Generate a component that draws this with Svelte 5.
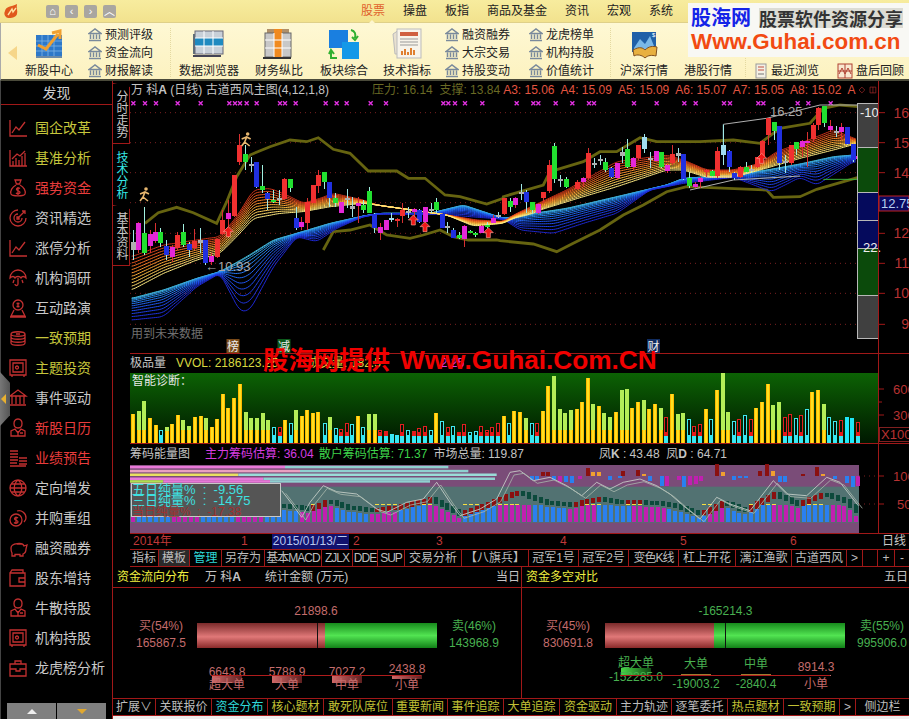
<script>
	// 行情图数据都是从截图上量的, g = 放大3倍后的坐标
	const lerp = (pts, x) => {
		if (x <= pts[0][0]) return pts[0][1];
		for (let i = 1; i < pts.length; i++) {
			if (x <= pts[i][0]) {
				const [a, b] = [pts[i - 1], pts[i]];
				return a[1] + ((b[1] - a[1]) * (x - a[0])) / (b[0] - a[0]);
			}
		}
		return pts[pts.length - 1][1];
	};
	const mx = g => g / 3;
	const my = g => (g - 30) / 3;
	const shift = (arr, d) => arr.map(p => [p[0] + d, ...p.slice(1)]);
	const line = pts => pts.map(p => `${mx(p[0]).toFixed(1)},${my(p[1]).toFixed(1)}`).join(' ');

	const olive = [
		[[45,400],[85,368],[140,352],[190,368],[260,400],[290,335],[320,260],[360,195],[420,170],[480,150],[530,155],[565,143],[610,178],[660,190],[715,243],[800,243],[835,265],[885,265],[945,315],[990,320],[1070,342],[1120,325],
		...shift([[10,320],[130,285],[150,245],[250,215],[300,185],[350,185],[420,143],[470,155],[600,155],[700,150],[780,160],[840,115],[930,100],[970,55],[1020,45],[1075,50]], 1110)],
		[[580,480],[610,425],[660,420],[720,405],[770,435],[840,445],[880,435],[930,420],[970,440],[1015,450],[1100,450],
		...shift([[0,452],[100,462],[170,485],[220,460],[300,420],[370,375],[430,345],[500,305],[560,290],[800,300],[820,322],[900,320],[950,298],[1075,262]], 1110)]
	];

	const orangeTop = [[5,500],[100,465],[200,450],[270,440],[320,380],[370,300],[420,295],[470,315],[520,340],[570,325],[610,310],[700,330],[740,345],[950,375],[1040,390],[1120,395],
		...shift([[40,375],[200,300],[350,215],[500,195],[550,210],[620,240],[700,240],[780,220],[830,185],[900,160],[1000,120],[1075,150]], 1110)];
	const orangeBot = [[5,600],[100,550],[200,510],[270,490],[320,440],[370,385],[450,370],[520,365],[600,350],[700,340],[740,345],[950,375],[1030,408],[1120,400],
		...shift([[40,385],[100,370],[120,360],[250,320],[350,290],[500,240],[550,240],[620,262],[700,262],[780,240],[900,205],[1000,180],[1075,160]], 1110)];
	const blueTop = [[5,625],[100,600],[200,565],[270,545],[350,500],[430,450],[500,430],[600,400],[700,378],[750,370],[900,370],[1000,345],[1120,385],
		...shift([[40,380],[100,370],[200,355],[350,320],[500,285],[550,265],[700,255],[800,240],[900,222],[1000,200],[1060,195]], 1110)];
	const blueBot = [[5,690],[100,680],[200,590],[270,550],[330,665],[360,660],[430,530],[500,440],[560,455],[620,415],[700,380],[750,372],[900,372],[960,375],[1120,388],
		...shift([[60,420],[160,430],[250,400],[350,370],[450,300],[550,280],[700,262],[815,305],[900,262],[950,285],[1060,215]], 1110)];

	const mix = (a, b, t) => a.map((v, i) => Math.round(v + (b[i] - v) * t));
	const ramp = (stops, t) => {
		const f = t * (stops.length - 1);
		const i = Math.min(Math.floor(f), stops.length - 2);
		return `rgb(${mix(stops[i], stops[i + 1], f - i).join(',')})`;
	};
	const smooth = (pts, x, r = 12) => {
		let s = 0;
		for (let d = -r; d <= r; d += 6) s += lerp(pts, x + d);
		return s / (Math.floor((2 * r) / 6) + 1);
	};
	function fan(top, bot, n, stops, power) {
		const out = [];
		for (let k = 0; k < n; k++) {
			const t = k / (n - 1);
			const w = Math.pow(t, power);
			const pts = [];
			for (let x = 5; x <= 2180; x += 6) {
				const a = smooth(top, x);
				pts.push([x, a + (smooth(bot, x) - a) * w]);
			}
			out.push({ pts: line(pts), color: ramp(stops, t) });
		}
		return out;
	}
	const fans = [
		...fan(blueTop, blueBot, 12, [[70,190,215],[40,140,245],[30,80,240],[30,40,210]], 1.7),
		...fan(orangeTop, orangeBot, 11, [[205,50,25],[250,115,35],[255,185,60],[255,235,130]], 1)
	];

	const cfill = { r: '#f03030', g: '#22e030', b: '#2030e0', m: '#e428d8', w: '#b0b0b0', c: '#a0dcf0' };
	const cwick = { r: '#d83030', g: '#a0f0e0', b: '#a0e8e8', m: '#d83030', w: '#a0e8e8', c: '#a0e8e8' };
	// x, 上影, 实体上, 实体下, 下影, 颜色
	const c5 = [
		[8,420,455,480,510,'w'],[25,395,400,480,490,'m'],[43,350,430,490,495,'g'],[59,420,432,468,490,'m'],[75,400,427,452,460,'m'],[91,415,427,458,470,'g'],[108,450,468,495,510,'b'],[126,465,470,500,515,'m'],[142,425,435,475,480,'r'],[160,403,427,465,470,'g'],
		[177,455,462,480,500,'b'],[193,418,452,475,480,'r'],[210,415,450,458,490,'w'],[226,450,450,520,525,'b'],[244,490,498,515,525,'m'],[261,447,447,500,505,'r'],[277,360,390,432,435,'r'],[294,330,370,388,440,'m'],[312,255,255,378,380,'r'],[328,132,165,215,225,'r'],
		[346,165,193,216,240,'g'],[362,200,222,228,245,'w'],[379,215,215,290,295,'b'],[396,225,288,300,310,'g'],[412,305,310,328,360,'b'],[429,300,330,335,340,'g'],[446,300,325,330,345,'w'],[463,265,267,328,330,'r'],[481,268,268,295,305,'g'],[497,350,385,415,420,'b'],
		[514,380,396,412,420,'m'],[531,325,335,400,420,'r'],[548,285,285,338,340,'r'],[565,240,255,288,310,'r'],[582,247,247,275,298,'g'],[598,275,277,325,350,'b'],[615,310,325,340,350,'g'],[632,335,337,368,370,'m'],[650,298,325,330,355,'w'],[667,320,348,358,380,'w'],
		[683,320,340,348,400,'m'],[700,330,345,360,370,'g'],[717,290,303,368,370,'g'],[733,370,372,415,430,'b'],[750,400,410,430,450,'m'],[767,390,390,420,420,'m'],[783,370,383,390,395,'c'],[800,385,388,392,410,'r'],[817,338,360,378,400,'r'],[834,350,362,370,385,'w'],
		[851,355,358,365,395,'m'],[868,358,360,395,398,'b'],[885,350,352,395,398,'m'],[902,340,357,362,370,'w'],[919,325,337,360,370,'g'],[936,372,373,413,415,'b'],[952,395,408,412,430,'w'],[969,415,420,443,445,'b'],[986,425,436,445,448,'g'],[1003,405,408,448,470,'m'],
		[1020,420,422,428,430,'g'],[1036,426,428,436,440,'g'],[1054,405,408,428,430,'m'],[1071,395,405,412,415,'g'],[1088,375,385,398,400,'m'],[1105,365,375,378,385,'w']
	];
	const c6 = [
		[12,323,323,372,375,'r'],[29,325,332,352,365,'g'],[46,320,325,345,355,'m'],[62,282,305,312,330,'w'],[79,300,305,335,370,'b'],[97,335,335,360,370,'g'],[113,340,343,368,372,'m'],[130,305,306,325,340,'r'],[146,210,225,302,310,'r'],[163,160,167,268,278,'g'],
		[180,255,268,272,292,'w'],[197,262,267,290,295,'g'],[231,270,275,298,300,'r'],[248,262,265,275,290,'m'],[265,175,190,265,270,'r'],[282,205,218,222,235,'w'],[299,195,208,213,225,'w'],[316,205,215,240,245,'g'],[333,230,235,262,265,'b'],[350,218,220,265,270,'m'],
		[367,170,187,198,220,'w'],[382,148,178,230,235,'g'],[400,200,205,232,240,'m'],[415,165,165,205,210,'r'],[433,133,140,178,190,'c'],[450,185,205,210,235,'w'],[467,183,183,212,215,'m'],[484,187,187,232,235,'g'],[501,220,225,242,250,'m'],[517,165,193,220,225,'r'],
		[534,175,190,197,215,'w'],[550,192,192,268,270,'b'],[568,245,263,287,295,'g'],[585,275,282,290,295,'m'],[601,262,265,275,295,'m'],[619,238,240,245,262,'r'],[636,240,243,257,262,'g'],[652,170,183,258,265,'r'],[670,105,165,195,225,'c'],[686,180,182,232,245,'b'],
		[703,245,248,263,270,'b'],[720,228,230,262,265,'r'],[737,215,232,245,250,'g'],[754,225,237,240,248,'w'],[771,200,200,232,235,'r'],[787,150,153,200,210,'r'],[805,85,85,135,165,'r'],[822,97,97,122,150,'g'],[838,108,108,218,240,'b'],[855,195,212,215,250,'w'],
		[872,165,165,218,225,'r'],[889,155,155,178,195,'g'],[906,150,152,172,200,'m'],[922,125,152,157,232,'m'],[940,100,105,148,155,'r'],[955,50,55,105,120,'r'],[973,48,48,98,110,'g'],[990,90,108,120,125,'m'],[1007,108,122,127,140,'w'],[1024,100,112,125,150,'m'],
		[1041,112,112,162,165,'b'],[1058,162,162,210,215,'b'],[1075,190,197,208,235,'m']
	];
	const candles = [...c5, ...shift(c6, 1110)].map(([x, wt, bt, bb, wb, c]) => ({
		x: Math.round(mx(x)), wt: my(wt), wb: my(wb), bt: my(bt), h: Math.max(2, (bb - bt) / 3), fill: cfill[c], wick: cwick[c]
	}));

	const marks = [10,45,78,143,212,298,315,330,350,380,450,465,497,587,620,650,722,768,940,955,975,1005,1057,
		...[50,100,115,167,217,267,282,402,470,553,587,672,690,775,790,893,925,992].map(v => v + 1110)].map(mx);
	const gridY = [68,158,248,338,430,520,610,703].map(my);
	const upArrows = [[295,425],[850,390],[885,410],[1075,428],[1895,205]].map(([x, y]) => [mx(x), my(y)]);
	const walkers = [[45,315],[350,150]].map(([x, y]) => [mx(x), my(y)]);
	const priceAxis = [[68,'16'],[158,'15'],[248,'14'],[430,'12'],[520,'11'],[610,'10'],[703,'9']].map(([y, t]) => ({ y: my(y), t }));
	const sideStack = [[0,44,'#404040'],[44,45,'#0b4a0b'],[89,28,'#050a5c'],[117,28,'#050a5c'],[145,47,'#0b4a0b'],[192,43,'#404040']];

	// 量能柱
	const vy = g => (g - 99) / 3;
	const v7 = [[8,222,'Y'],[26,212,'G'],[43,183,'G'],[60,235,'Y'],[78,255,'Y'],[92,270,'C'],[110,262,'G'],[127,252,'Y'],[143,225,'Y'],[160,240,'G'],[178,258,'G'],[195,232,'Y'],[212,228,'Y'],[228,235,'G'],[245,260,'Y'],[262,237,'Y'],[278,162,'Y'],[295,203,'Y'],[313,175,'Y'],[330,132,'Y'],[347,217,'G'],[364,235,'G'],[380,235,'G'],[398,220,'G'],[415,240,'G'],[432,262,'C'],[450,262,'R'],[465,240,'Y'],[482,250,'C'],[497,210,'G'],[515,228,'Y'],[532,210,'Y'],[548,218,'Y'],[565,216,'Y'],[584,250,'C'],[600,232,'G'],[618,265,'C'],[633,268,'R'],[650,250,'R'],[667,253,'C'],[683,228,'Y'],[700,262,'C'],[717,222,'G'],[735,222,'G'],[750,270,'R'],[767,275,'R'],[785,283,'C'],[800,287,'C'],[817,253,'R'],[835,270,'C'],[852,275,'R'],[868,264,'R'],[886,258,'R'],[903,272,'C'],[918,220,'Y'],[936,243,'C'],[953,262,'R'],[970,258,'C'],[988,278,'R'],[1003,252,'R'],[1020,276,'C'],[1037,275,'C'],[1053,258,'R'],[1070,270,'R'],[1087,262,'R'],[1105,250,'R'],[1122,228,'Y']];
	const v8 = [[0,250,'C'],[15,213,'Y'],[32,216,'Y'],[50,235,'G'],[67,250,'C'],[84,250,'R'],[100,213,'Y'],[115,138,'Y'],[133,108,'G'],[151,208,'G'],[167,220,'G'],[184,210,'G'],[202,207,'Y'],[218,186,'Y'],[235,115,'Y'],[251,192,'G'],[268,198,'Y'],[285,220,'G'],[302,232,'G'],[319,216,'Y'],[337,150,'G'],[352,147,'G'],[369,205,'Y'],[386,185,'Y'],[403,180,'G'],[420,206,'Y'],[437,192,'Y'],[454,205,'G'],[471,232,'R'],[488,163,'Y'],[505,222,'G'],[520,220,'G'],[538,238,'C'],[555,260,'R'],[572,253,'R'],[589,208,'Y'],[606,238,'C'],[622,150,'Y'],[640,100,'G'],[655,216,'G'],[673,243,'C'],[690,237,'R'],[707,226,'C'],[724,237,'R'],[741,205,'Y'],[757,186,'Y'],[775,133,'Y'],[790,195,'G'],[808,186,'G'],[826,232,'R'],[842,223,'R'],[860,235,'C'],[876,225,'R'],[892,208,'C'],[909,156,'Y'],[926,150,'Y'],[943,192,'G'],[960,232,'C'],[977,243,'C'],[995,240,'R'],[1012,232,'F'],[1028,235,'F'],[1045,247,'R']];
	const vols = [...v7, ...shift(v8, 1138)];

	// 筹码图
	const cy = g => (g - 375) / 3;
	const chipTop = [
		[382,[[0,465,'#e878d8'],[465,955,'#8fd0d0']]],
		[394,[[0,510,'#e8a0c0'],[510,1015,'#8fd0d0']]],
		[405,[[0,325,'#e8e060'],[325,1100,'#9adcd8']]],
		[417,[[0,400,'#e878d8'],[400,1095,'#8fd0d0']]],
		[425,[[0,100,'#b0e050'],[100,420,'#e878d8'],[420,900,'#8fd0d0']]]
	];
	const curveA = [[455,455],[490,500],[515,535],[540,490],[580,440],[620,458],[680,465],[740,510],[770,520],[830,490],[880,480],[920,430],[960,490],[990,530],[1050,510],[1100,480],[1140,400],
		...shift([[30,395],[70,425],[120,415],[170,440],[215,470],[260,430],[300,450],[340,430],[390,420],[440,440],[480,465],[520,500],[570,540],[620,475],[660,495],[720,515],[790,425],[830,465],[890,470],[950,415],[990,430],[1045,500]], 1140)];
	const midCurve = [[455,500],[540,510],[590,485],[650,505],[730,515],[800,505],[900,480],[985,525],[1050,505],[1140,465],
		...shift([[30,460],[60,475],[100,490],[180,498],[260,480],[330,490],[400,490],[470,495],[520,510],[570,525],[640,490],[700,515],[790,465],[860,495],[940,465],[1010,490],[1045,525]], 1140)];
	const chipLine = (pts, dy) => pts.map(p => `${(p[0] / 3).toFixed(1)},${cy(p[1] + dy).toFixed(1)}`).join(' ');
	const step = 17.5;
	const chipBars = [];
	const hashOf = i => Math.abs(Math.sin(i * 12.9898) * 43758.5453) % 1;
	for (let i = 0, x = 8; x <= 2185; i++, x += step) {
		const mid = lerp(midCurve, x);
		const top = x < 455 ? 530 : Math.max(498, mid + 12);
		const blueRun = Math.sin(i * 0.55) + hashOf(i) * 0.9 > 0.35;
		chipBars.push({ x: Math.round(x / 3) - 2, y: cy(top), h: (548 - top) / 3, fill: blueRun ? '#2a80f0' : '#c020b0' });
	}
	const chipBlocks = [];
	for (let x = 462; x <= 2185; x += step) {
		const a = lerp(midCurve, x - step);
		const b = lerp(midCurve, x);
		const up = b <= a;
		chipBlocks.push({ x: Math.round(x / 3) - 2, y: cy(Math.min(a, b) - 6), h: Math.max(3, Math.abs(a - b) / 3 + 4), fill: up ? '#8a1010' : '#0c4a3c', up, base: cy(Math.max(a, b) + 6) });
	}
	// 上半部 小柱: x 高 色 (高为负就是向下)
	const miniBars = [[100,10,'#8a1010'],[115,10,'#8a1010'],[235,22,'#8a1010'],[250,10,'#f0a030'],[268,10,'#f0a030'],[338,15,'#8a1010'],[385,18,'#8a1010'],[402,5,'#f0a030'],[620,40,'#8a1010'],[640,12,'#f0a030'],[750,15,'#8a1010'],[770,35,'#8a1010'],[790,15,'#f0a030'],[880,6,'#8a1010'],[920,25,'#8a1010'],[940,5,'#f0a030'],
		[65,-12,'#2a80f0'],[82,-14,'#2a80f0'],[132,-14,'#2a80f0'],[150,-18,'#c020b0'],[168,-18,'#2a80f0'],[185,-22,'#2a80f0'],[210,-10,'#c020b0'],[300,-14,'#2a80f0'],[330,-8,'#2a80f0'],[420,-15,'#2a80f0'],[455,-30,'#2a80f0'],[472,-30,'#c020b0'],[506,-12,'#c020b0'],[522,-35,'#2a80f0'],[540,-28,'#c020b0'],[557,-24,'#c020b0'],[572,-16,'#c020b0'],[672,-14,'#2a80f0'],[690,-6,'#2a80f0'],[708,-6,'#2a80f0'],[810,-20,'#2a80f0'],[826,-20,'#2a80f0'],[976,-10,'#2a80f0'],[1012,-22,'#2a80f0'],[1028,-35,'#2a80f0'],[1045,-30,'#c020b0']]
		.map(([x, h, c]) => ({ x: Math.round((x + 1140) / 3) - 2, y: h > 0 ? cy(410 - h) : cy(410), h: Math.abs(h) / 3, c }));

	const ribbonSmall = a => a.map(t => ({ t }));
	const tabsA = [['指标',29],['模板',31,'on'],['管理',32,'cy'],['另存为',43],['基本MACD',57,'tight'],['ZJLX',31,'tight'],['DDE',25,'tight'],['SUP',27,'tight'],['交易分析',57],['【八旗兵】',67],['冠军1号',50],['冠军2号',50],['变色K线',50,'tight'],['杠上开花',57],['漓江渔歌',56],['古道西风',55],['>',16],['',15],['+',17],['-',14]];
	const tabsB = [['扩展∨',43,''],['关联报价',56,''],['资金分布',56,'cy'],['核心题材',56,'ye'],['敢死队席位',69,'ye'],['重要新闻',55,'ye'],['事件追踪',56,'ye'],['大单追踪',56,'ye'],['资金驱动',57,'ye'],['主力轨迹',55,''],['逐笔委托',56,''],['热点题材',56,'ye'],['一致预期',56,'ye'],['>',16,''],['侧边栏',53,'']];
	const dates = [[3,'2014年'],[111,'1'],[223,'2'],[306,'3'],[430,'4'],[550,'5'],[660,'6']];

	const sideIcons = {
		line: 'M2 2V18H19M4 15L8 9L11 12L17 4',
		bars: 'M2 2V18H19M5 18V13M8 18V10M11 18V12M14 18V8M17 18V5M4 11L9 6L12 8L17 3',
		bag: 'M7 2H13L11.5 6H8.5ZM8 7C4 9 2 13 3 16C4 18.5 16 18.5 17 16C18 13 16 9 12 7M12 10.5C11 9.5 8.5 9.5 8.5 11.3C8.5 13 12 12.5 12 14.3C12 16 9 16 8 15M10 9V17',
		target: 'M10 2A8 8 0 1 0 18 10M10 6A4 4 0 1 0 14 10M10 10L17 3M14 3H17V6M9 9H11V11H9Z',
		umbrella: 'M2 10A8 8 0 0 1 18 10C16 8 14 8 13 10C12 8 8 8 7 10C6 8 4 8 2 10ZM10 10V16C10 18 7 18 7 16M14 12L15 15M6 12L5 15',
		host: 'M10 2A5 5 0 1 0 10 12A5 5 0 1 0 10 2ZM10 4.5V9.5M8.5 8.5H11.5M8.5 5.5H11.5M6 12L3 18H17L14 12M2 19H18',
		coins: 'M3 6C3 3 17 3 17 6C17 9 3 9 3 6ZM3 6V9C3 12 17 12 17 9V6M3 9V12C3 15 17 15 17 12V9M3 12V15C3 18 17 18 17 15V12M8 6H12',
		safe: 'M2 2H18V17H2ZM5 5H15V14H5ZM4 17V19M16 17V19M9 8A1.5 1.5 0 1 0 9 11A1.5 1.5 0 1 0 9 8Z',
		bank: 'M2 8L10 2L18 8ZM4 8V16M8 8V16M12 8V16M16 8V16M2 17H18',
		man: 'M10 1C7 1 6 3 6 5.5C6 8.5 8 10 10 10C12 10 14 8.5 14 5.5C14 3 13 1 10 1ZM7 11L3 13V18H17V13L13 11L10 15ZM10 13V18M12 15H15',
		stack: 'M2 3H10M2 6H10M2 9H10M2 12H10M2 15H9M11 10H19M11 13H19M11 16H19M2 18H18',
		globe: 'M10 2A8 8 0 1 0 10 18A8 8 0 1 0 10 2ZM2 10H18M3 6H17M3 14H17M10 2C5 6 5 14 10 18C15 14 15 6 10 2',
		coin: 'M8 6A6 6 0 1 0 8 18A6 6 0 1 0 8 6ZM9 3A7 7 0 0 1 18 10C18 12 17 13 16 14M10 10C9 9 6.5 9 6.5 10.8C6.5 12.5 10 12 10 13.8C10 15.5 7 15.5 6 14.5M8 8.5V16',
		pig: 'M3 10C3 5 15 4 16 8L19 7L18 11C18 15 15 16 15 16V18H12V16.5H7V18H4V15C3 14 3 12 3 10ZM9 6H13',
		wallet: 'M2 5H17V18H2ZM2 5L4 2H15V5M11 10H17V14H11Z',
		case: 'M2 6H18V18H2ZM7 6V3H13V6M2 11H8V13H12V11H18'
	};
	const side = [
		['国企改革','line','ye'],['基准分析','bars','ye'],['强势资金','bag','re'],['资讯精选','target',''],['涨停分析','line',''],['机构调研','umbrella',''],['互动路演','host',''],['一致预期','coins','ye'],['主题投资','safe','ye'],['事件驱动','bank',''],
		['新股日历','man','re'],['业绩预告','stack','re'],['定向增发','globe',''],['并购重组','coin',''],['融资融券','pig',''],['股东增持','wallet',''],['牛散持股','man',''],['机构持股','safe',''],['龙虎榜分析','case','']
	];

	const menu = [['股票','on'],['操盘',''],['板指',''],['商品及基金',''],['资讯',''],['宏观',''],['系统','']];

	const big = {
		newstock: '<rect x="3" y="7" width="26" height="22" fill="#2d78c8"/><path d="M3 13H29M3 18H29M3 23H29M9 7V29M15 7V29M21 7V29" stroke="#7fb5e6" stroke-width=".8"/><rect x="3" y="28" width="26" height="2" fill="#6a8aa8"/><path d="M5 17L13 21L25 6M19 5L27 3L27 11" fill="none" stroke="#f0a030" stroke-width="3"/>',
		browse: '<rect x="0" y="6" width="22" height="20" fill="#607078"/><rect x="2" y="3" width="28" height="23" fill="#c8d0d8" stroke="#667"/><rect x="2" y="10" width="28" height="8" fill="#1f8ac0"/><path d="M11 3V26M20 3V26M2 10H30M2 18H30" stroke="#fff"/><path d="M0 28H28" stroke="#445" stroke-width="2"/>',
		compare: '<rect x="4" y="1" width="22" height="24" fill="#b0906a"/><rect x="2" y="5" width="26" height="24" fill="#c8c8c8" stroke="#666"/><rect x="11" y="1" width="8" height="28" fill="#f08a20"/><path d="M2 12H28M2 20H28M11 5V29M19 5V29" stroke="#fff"/><path d="M0 30H28" stroke="#333" stroke-width="2"/>',
		block: '<rect x="1" y="2" width="19" height="18" fill="#1a7fe0"/><rect x="14" y="14" width="17" height="17" fill="#1498e8"/><path d="M23 2C27 3 28 6 27 10M24 9L27 12L30 8" fill="none" stroke="#30b030" stroke-width="2"/><path d="M3 23V30H9M1 26L3 22L6 26" fill="none" stroke="#30b030" stroke-width="2"/>',
		tech: '<path d="M2 6L8 2L10 26L4 26Z" fill="#e8e0d0" stroke="#bbb"/><rect x="6" y="1" width="24" height="29" fill="#f8f4ea" stroke="#bbb"/><rect x="9" y="4" width="18" height="4" fill="#d06040"/><path d="M9 11H27M9 14H27M9 17H27" stroke="#999"/><path d="M11 27V23M14 27V21M17 27V24M20 27V20M23 27V22" stroke="#e08030" stroke-width="2"/>',
		map: '<path d="M4 4H28V24H4Z" fill="#2060a8"/><path d="M6 20L12 11L17 16L22 8L26 18V22H6Z" fill="#7ab8e8"/><path d="M5 22C12 18 15 20 17 22C21 18 25 18 29 19L28 28C24 27 20 27 17 30C14 27 9 26 6 28Z" fill="#e8b040" stroke="#805020"/><text x="24" y="9" font-size="6" fill="#fff">$</text>'
	};
	const bankIcon = '<path d="M1 5.5L7 1L13 5.5ZM2.5 6.5V11M5.5 6.5V11M8.5 6.5V11M11.5 6.5V11" fill="none" stroke="#7a8a9c" stroke-width="1.5"/><path d="M1 12.5H13" stroke="#7a8a9c" stroke-width="1.5"/>';
	const smallA = ribbonSmall(['预测评级','资金流向','财报解读']);
	const smallB = ribbonSmall(['融资融券','大宗交易','持股变动']);
	const smallC = ribbonSmall(['龙虎榜单','机构持股','价值统计']);

	const flowLeft = [
		{ v: '6643.8', n: '超大单', c: 'red' },
		{ v: '5788.9', n: '大单', c: 'red' },
		{ v: '7027.2', n: '中单', c: 'red' },
		{ v: '2438.8', n: '小单', c: 'red', small: true }
	];
	const flowRight = [
		{ n: '超大单', v: '-152285.0', c: 'grn', flip: true },
		{ n: '大单', v: '-19003.2', c: 'grn', flip: true, thin: true },
		{ n: '中单', v: '-2840.4', c: 'grn', flip: true, thin: true },
		{ v: '8914.3', n: '小单', c: 'red', thin: true, low: true }
	];
</script>

<div class="app">
	<header class="topbar">
		<div class="logo-row">
			<svg class="logo" width="16" height="16" viewBox="0 0 16 16"><path d="M2 8C3 3 8 4 14 1C13 5 15 8 14 11C13 15 5 16 3 14C1 12 1 10 2 8Z" fill="#e0581c"/><path d="M5 12L9 6L10 9L13 5" fill="none" stroke="#ffe0a0" stroke-width="1.4"/></svg>
			<div class="navs">
				<span class="nav">⌂</span><span class="nav">‹</span><span class="nav">›</span><span class="nav">︿</span>
			</div>
			<nav class="menu">
				{#each menu as [t, cls]}
					<span class:on={cls === 'on'}>{t}</span>
				{/each}
			</nav>
		</div>
		<div class="ribbon">
			<div class="back"></div>
			<div class="big w54"><svg width="32" height="32" viewBox="0 0 32 32">{@html big.newstock}</svg><span>新股中心</span></div>
			<div class="smalls first">
				{#each smallA as s}<div class="small"><svg width="14" height="14" viewBox="0 0 14 14">{@html bankIcon}</svg>{s.t}</div>{/each}
			</div>
			<div class="sep"></div>
			<div class="big w70"><svg width="32" height="32" viewBox="0 0 32 32">{@html big.browse}</svg><span>数据浏览器</span></div>
			<div class="big w70"><svg width="32" height="32" viewBox="0 0 32 32">{@html big.compare}</svg><span>财务纵比</span></div>
			<div class="big w60"><svg width="32" height="32" viewBox="0 0 32 32">{@html big.block}</svg><span>板块综合</span></div>
			<div class="big w66"><svg width="32" height="32" viewBox="0 0 32 32">{@html big.tech}</svg><span>技术指标</span></div>
			<div class="smalls gap6">
				{#each smallB as s}<div class="small"><svg width="14" height="14" viewBox="0 0 14 14">{@html bankIcon}</svg>{s.t}</div>{/each}
			</div>
			<div class="smalls gap19">
				{#each smallC as s}<div class="small"><svg width="14" height="14" viewBox="0 0 14 14">{@html bankIcon}</svg>{s.t}</div>{/each}
			</div>
			<div class="sep s16"></div>
			<div class="big w60"><svg width="32" height="32" viewBox="0 0 32 32">{@html big.map}</svg><span>沪深行情</span></div>
			<div class="big w68"><div class="noicon"></div><span>港股行情</span></div>
			<div class="sep s3"></div>
			<div class="recent">
				<div class="small"><svg width="14" height="16" viewBox="0 0 14 16"><rect x="2" y="1" width="10" height="14" fill="#f4f0e4" stroke="#999"/><path d="M4 4H10M4 7H10" stroke="#c05040"/><path d="M4 11H10" stroke="#777"/></svg>最近浏览</div>
				<div class="small"><svg width="16" height="16" viewBox="0 0 16 16"><rect x="1" y="1" width="14" height="14" fill="#f8e8d0" stroke="#b04030"/><path d="M1 8H15M8 1V15M2 11L5 5L8 11L11 5L14 11" fill="none" stroke="#b04030"/></svg>盘后回顾</div>
			</div>
		</div>
	</header>

	<div class="watermark">
		<div class="wm-top">
			<b class="wm-name">股海网</b>
			<span class="wm-slogan">股票软件资源分享</span>
		</div>
		<div class="wm-url">Www.Guhai.com.cn</div>
	</div>

	<div class="body">
		<aside class="side">
			<div class="side-head">发现</div>
			<ul>
				{#each side as [t, ic, cls]}
					<li class={cls}>
						<svg width="20" height="20" viewBox="0 0 20 20"><path d={sideIcons[ic]} /></svg>
						<span>{t}</span>
					</li>
				{/each}
			</ul>
			<div class="scrollers">
				<button aria-label="上"><i class="tri up"></i></button>
				<button aria-label="下"><i class="tri down"></i></button>
			</div>
			<div class="handle"><i></i></div>
		</aside>

		<div class="work">
			<div class="upper">
				<div class="vtabs">
					<div class="vtab">分时走势</div>
					<div class="vtab active">技术分析</div>
					<div class="vtab">基本资料</div>
				</div>
				<div class="charts">
					<div class="title t-main">
						<span class="gray">万 科<b>A</b> (日线) 古道西风主图(4,12,1,8)</span>
						<span class="olive m-a">压力: 16.14&nbsp; 支撑: 13.84</span>
						<span class="rd m-b">A3: 15.06&nbsp; A4: 15.09&nbsp; A5: 15.09&nbsp; A6: 15.07&nbsp; A7: 15.05&nbsp; A8: 15.02&nbsp; A</span>
						<svg class="mini" width="32" height="12" viewBox="0 0 32 12"><path d="M5 1L10 6L5 11L0 6Z M19 1H29V11H19ZM24 1V11" fill="none" stroke="#c03030"/></svg>
					</div>

					<svg class="chart" width="779" height="253" viewBox="0 0 779 253">
						{#each gridY as y}
							<line class="dot" x1="0" x2="727" y1={y} y2={y} />
						{/each}
						{#each marks as x}
							<path class="mark" d="M{x - 2} {my(40) - 2}l4 4m0 -4l-4 4" />
						{/each}
						{#each olive as o}
							<polyline class="band" points={line(o)} />
						{/each}
						{#each fans as f}
							<polyline class="fan" points={f.pts} stroke={f.color} />
						{/each}
						<polyline class="trend" points={line([[670+1110,103],[800+1110,85],[960+1110,45],[1135+1110,45]])} />
						<polyline class="trend" points={line([[570+1110,300],[700+1110,270],[900+1110,258]])} />
						<line class="cyan" x1={mx(1780)} x2={mx(1780)} y1={my(103)} y2={my(165)} />
						<g class="candles">
							{#each candles as c}
								<line x1={c.x + 0.5} x2={c.x + 0.5} y1={c.wt} y2={c.wb} stroke={c.wick} />
								<rect x={c.x - 2} y={c.bt} width="5" height={c.h} fill={c.fill} />
							{/each}
						</g>
						{#each upArrows as [x, y]}
							<path class="arrow" d="M{x} {y - 5}l5 5h-3v5h-4v-5h-3z" />
						{/each}
						{#each walkers as [x, y]}
							<g class="walker" transform="translate({x} {y})">
								<circle cx="1" cy="-6" r="1.8" />
								<path d="M-5 -1L0 -3L4 -1M0 -3L-2 2L-5 6M-2 2L3 6" />
							</g>
						{/each}
						<text class="t tgray" x={mx(225)} y={my(530) + 4}>←10.93</text>
						<text class="t tgray" x={mx(810 + 1110)} y={my(65) + 4}>16.25</text>
						<line class="lime" x1={mx(970 + 1110)} x2={mx(1135 + 1110)} y1={my(268)} y2={my(268)} />
						<text class="t tgray2" x="1" y={my(730) + 5}>用到未来数据</text>

						{#each sideStack as [top, h, fill]}
							<rect class="stack" x="727.5" y={3 + top} width="21" height={h} {fill} />
						{/each}
						<text class="t twhite" x="730" y="16.5">-10</text>
						<text class="t twhite" x="733" y="151.5">22.</text>

						<g class="tag">
							<rect x="96.5" y="239" width="13" height="14" fill="#7a4a18" />
							<text class="t tw11" x="97" y="251">榜</text>
							<rect x="147.5" y="239" width="13" height="14" fill="#0c5a1c" />
							<text class="t tw11" x="148" y="251">减</text>
							<rect x="517" y="239" width="13" height="14" fill="#102c60" />
							<text class="t tw11" x="517.5" y="251">财</text>
						</g>

						<line class="red" x1="748.5" x2="748.5" y1="0" y2="253" />
						{#each priceAxis as p}
							<text class="t tred14" x="779" y={p.y + 5} text-anchor="end">{p.t}</text>
							<line class="red" x1="748" x2="755" y1={p.y} y2={p.y} />
						{/each}
						<rect x="749" y="96" width="30" height="15" fill="#0a0a60" stroke="#c02020" />
						<text class="t tlb" x="751" y="108">12.75</text>
					</svg>

					<div class="title t-vol">
						<span class="gray">极品量</span>
						<span class="yellow m-c">VVOL: 2186123.25</span>
						<span class="yellow m-d">成交量: 182.5</span>
						<span class="mag m-e">2.25</span>
					</div>

					<svg class="chart" width="779" height="70" viewBox="0 0 779 70">
						<defs>
							<linearGradient id="gv" x1="0" x2="0" y1="0" y2="1">
								<stop offset="0" stop-color="#0c6204" /><stop offset="1" stop-color="#001800" />
							</linearGradient>
						</defs>
						<rect x="0" y="0" width="748" height="70" fill="url(#gv)" />
						<text class="t twhite12" x="2" y="12">智能诊断：</text>
						<g class="candles">
							{#each vols as [x, top, kind]}
								{@const bx = Math.round(x / 3) - 2}
								{@const ty = vy(top)}
								{@const base = 69.5}
								{#if kind === 'Y'}
									<rect x={bx} y={ty} width="4" height={base - ty} fill="#ffb800" />
									<rect x={bx + 1} y={ty} width="2" height={base - ty} fill="#ffe020" />
								{:else if kind === 'G'}
									<rect x={bx} y={ty} width="4" height={base - ty} fill="#ffb800" />
									<rect x={bx + 1} y={ty} width="2" height={base - ty} fill="#ffe020" />
									<rect x={bx} y={ty} width="4" height={Math.max(4, vy(270) - ty)} fill="#b4ee58" />
								{:else if kind === 'C'}
									<rect x={bx + 0.5} y={ty} width="3" height={base - ty} fill="#041404" stroke="#40e8f0" />
									<rect x={bx} y={vy(284)} width="4" height={base - vy(284)} fill="#38e8f4" />
								{:else if kind === 'F'}
									<rect x={bx} y={ty} width="4" height={base - ty} fill="#20e8f8" />
								{:else}
									<rect x={bx + 0.5} y={ty} width="3" height={base - ty} fill="#041404" stroke="#e02020" />
									<rect x={bx} y={vy(276)} width="4" height={vy(288) - vy(276)} fill="#e81818" />
									<rect x={bx} y={vy(288)} width="4" height={base - vy(288)} fill="#38e8f4" />
								{/if}
							{/each}
						</g>
						<line class="red" x1="748.5" x2="748.5" y1="0" y2="70" />
						<line class="red" x1="748" x2="754" y1="16" y2="16" />
						<line class="red" x1="748" x2="752" y1="29" y2="29" />
						<line class="red" x1="748" x2="754" y1="42" y2="42" />
						<text class="t tred13" x="763" y="21">600</text>
						<text class="t tred13" x="763" y="47">300</text>
						<rect x="749.5" y="54.5" width="40" height="14" fill="none" stroke="#802020" />
						<text class="t tred13" x="751" y="66">X100</text>
					</svg>

					<div class="title t-chip">
						<span class="gray">筹码能量图</span>
						<span class="mag m-f">主力筹码估算: 36.04</span>
						<span class="grn m-g">散户筹码估算: 71.37</span>
						<span class="gray m-h">市场总量: 119.87</span>
						<span class="gray m-i">凤<b>K</b> : 43.48&nbsp; 凤<b>D</b> : 64.71</span>
					</div>

					<svg class="chart" width="779" height="69" viewBox="0 0 779 69">
						<rect x="0" y="1" width="729" height="68" fill="#7a4c78" />
						<rect x="0" y={cy(443)} width="729" height="36" fill="#527272" />
						{#each chipTop as [y, parts]}
							{#each parts as [a, b, c]}
								<rect x={a / 3} y={cy(y) - 0.5} width={(b - a) / 3} height="2.5" fill={c} />
							{/each}
						{/each}
						<g class="candles">
							{#each miniBars as b}
								<rect x={b.x} y={b.y} width="4" height={b.h} fill={b.c} />
							{/each}
							{#each chipBars as b}
								<rect x={b.x} y={b.y} width="4" height={b.h} fill={b.fill} />
							{/each}
							{#each chipBlocks as b}
								{#if b.up}
									<rect x={b.x} y={cy(498) - 1} width="4" height="1" fill="#f8e040" />
								{/if}
								<rect x={b.x} y={b.y} width="4" height={b.h} fill={b.fill} />
							{/each}
						</g>
						<polyline class="wave" points={chipLine(curveA, 0)} />
						<polyline class="wave w2" points={chipLine(curveA.map(p => [p[0] + 12, p[1]]), 8)} />
						<rect class="legend" x="1.5" y="19.5" width="149" height="33" />
						<text class="t tcy" x="2" y="30">五日纯量%&nbsp; :&nbsp; -9.56</text>
						<text class="t tcy" x="2" y="41">三日纯量%&nbsp; :&nbsp; -14.75</text>
						<text class="t tfade" x="2" y="52">当日纯量%&nbsp; :&nbsp; -17.38</text>
						<line class="red" x1="748.5" x2="748.5" y1="0" y2="69" />
						<line class="dot" x1="729" x2="748" y1="12" y2="12" />
						<line class="dot" x1="729" x2="748" y1="40" y2="40" />
						<line class="red" x1="748" x2="754" y1="12" y2="12" />
						<line class="red" x1="748" x2="754" y1="40" y2="40" />
						<text class="t tred13" x="763" y="17">100</text>
						<text class="t tred13" x="767" y="45">50</text>
					</svg>

					<div class="dates">
						{#each dates as [x, t]}
							<span class="date" style="left:{x}px">{t}</span>
						{/each}
						<span class="cursor">2015/01/13/二</span>
						<span class="kind">日线</span>
					</div>
					<div class="tabs-a">
						{#each tabsA as [t, w, cls]}
							<span class="tab {cls || ''}" style="width:{w}px">{t}</span>
						{/each}
					</div>
				</div>
			</div>

			<div class="panels">
				<section class="panel left">
					<div class="p-head">
						<span class="yellow2">资金流向分布</span>
						<span class="gray name">万 科<b>A</b></span>
						<span class="gray stat">统计金额 (万元)</span>
						<span class="gray period">当日</span>
					</div>
					<div class="p-body">
						<div class="net netred">21898.6</div>
						<div class="barrow">
							<div class="side-val re-t"><span>买(54%)</span><span>165867.5</span></div>
							<div class="bar">
								<div class="b-red" style="width:128px"></div>
								<div class="b-grn"></div>
								<i class="tick" style="left:120px"></i>
							</div>
							<div class="side-val gr-t"><span>卖(46%)</span><span>143968.9</span></div>
						</div>
						<div class="flows">
							{#each flowLeft as f}
								<div class="flow {f.c}" class:lift={f.small}>
									<span>{f.v}</span>
									<i class="grad" class:short={f.small}></i>
									<span class="nm">{f.n}</span>
								</div>
							{/each}
							<i class="axis"></i>
						</div>
					</div>
				</section>
				<section class="panel right">
					<div class="p-head">
						<span class="yellow2">资金多空对比</span>
						<span class="gray period">五日</span>
					</div>
					<div class="p-body">
						<div class="net netgrn">-165214.3</div>
						<div class="barrow">
							<div class="side-val re-t"><span>买(45%)</span><span>830691.8</span></div>
							<div class="bar">
								<div class="b-red" style="width:109px"></div>
								<div class="b-grn"></div>
								<i class="tick" style="left:120px"></i>
							</div>
							<div class="side-val gr-t"><span>卖(55%)</span><span>995906.0</span></div>
						</div>
						<div class="flows two">
							{#each flowRight as f}
								<div class="flow {f.c}" class:up10={f.flip && !f.thin} class:up9={f.flip && f.thin} class:up6={f.low}>
									{#if f.flip}
										<span class="nm">{f.n}</span>
										<i class="grad" class:gline={f.thin} class:ggreen={!f.thin}></i>
										<span>{f.v}</span>
									{:else}
										<span>{f.v}</span>
										<i class="grad rline"></i>
										<span class="nm">{f.n}</span>
									{/if}
								</div>
							{/each}
							<i class="axis"></i>
						</div>
					</div>
				</section>
			</div>

			<div class="tabs-b">
				{#each tabsB as [t, w, cls]}
					<span class="tab {cls}" style="width:{w}px">{t}</span>
				{/each}
			</div>
			<div class="statusline"></div>
		</div>
	</div>

	<div class="promo">股海网提供 <span>Www.Guhai.Com.CN</span></div>
</div>

<style>
	:global(body) {
		margin: 0;
		background: #000;
	}

	.app {
		position: relative;
		width: 909px;
		height: 719px;
		overflow: hidden;
		background: #000;
		font: 12px/1.2 "Liberation Sans", "Noto Sans CJK SC", sans-serif;
		color: #c4c4c4;
	}

	/* 顶部工具栏 */
	.topbar {
		height: 81px;
		color: #222;
	}

	.logo-row {
		display: flex;
		align-items: center;
		height: 23px;
		background: linear-gradient(#f7ec9e, #f2e28e);
		border-bottom: 1px solid #dfd089;
		box-sizing: border-box;
		position: relative;
	}

	.logo {
		margin-left: 3px;
	}

	.navs {
		display: flex;
		gap: 6px;
		margin-left: 27px;
	}

	.nav {
		width: 13px;
		height: 13px;
		border-radius: 2px;
		background: #a9a6a0;
		color: #fff;
		text-align: center;
		font-size: 11px;
		line-height: 12px;
	}

	.menu {
		display: flex;
		margin-left: 245px;
		gap: 18px;
		font-size: 12px;
	}

	.menu .on {
		color: #e0622c;
		position: relative;
	}

	.menu .on::after {
		content: "";
		position: absolute;
		left: 7px;
		bottom: -6px;
		border: 4px solid transparent;
		border-top: 0;
		border-bottom-color: #fdf6cf;
	}

	.ribbon {
		display: flex;
		height: 58px;
		padding-top: 3px;
		box-sizing: border-box;
		background: linear-gradient(#fef8d4, #fcf2c0);
		border-bottom: 2px solid #4a4a3a;
		border-left: 1px solid #aaa;
	}

	.back {
		width: 0;
		height: 0;
		margin: 20px 5px 0 7px;
		border: 7px solid transparent;
		border-left: 0;
		border-right: 9px solid #f6d68a;
	}

	.big {
		display: flex;
		flex-direction: column;
		align-items: center;
		flex: none;
	}

	.big svg,
	.noicon {
		height: 36px;
		flex: none;
	}

	.big span {
		line-height: 18px;
		margin-top: 0;
		white-space: nowrap;
	}

	.w54 { width: 54px; }
	.w60 { width: 60px; }
	.w66 { width: 66px; }
	.w68 { width: 68px; }
	.w70 { width: 70px; }

	.smalls {
		flex: none;
		width: 65px;
	}

	.smalls.first { margin-left: 12px; }
	.smalls.gap6 { margin-left: 5px; }
	.smalls.gap19 { margin-left: 19px; }

	.small {
		display: flex;
		align-items: center;
		gap: 3px;
		height: 18px;
		white-space: nowrap;
	}

	.sep {
		width: 0;
		margin: 2px 3px 2px 17px;
		border-left: 1px dotted #e4d9a0;
	}

	.sep.s16 { margin-left: 16px; }
	.sep.s3 { margin-left: 3px; }

	.recent {
		display: flex;
		gap: 18px;
		margin-left: 5px;
		padding-top: 36px;
	}

	/* 水印 */
	.watermark {
		position: absolute;
		left: 688px;
		top: 3px;
		width: 221px;
		height: 54px;
		background: #f8f8f4;
		padding: 3px 0 0 3px;
		box-sizing: border-box;
	}

	.wm-top {
		display: flex;
		align-items: center;
		gap: 8px;
	}

	.wm-name {
		font-size: 20px;
		line-height: 24px;
		color: #1424e8;
	}

	.wm-slogan {
		background: #dcdcd4;
		color: #333;
		font: 700 18px/20px "Noto Sans CJK SC", serif;
		width: 144px;
		white-space: nowrap;
	}

	.wm-url {
		font: 700 22.4px/24px "Liberation Sans", sans-serif;
		color: #f24a12;
		white-space: nowrap;
	}

	.promo {
		position: absolute;
		left: 263px;
		top: 345px;
		color: #f00000;
		font-weight: 700;
		font-size: 25.4px;
		line-height: 30px;
		white-space: nowrap;
	}

	.promo span {
		font-size: 26.2px;
		margin-left: 3px;
	}

	/* 左侧 */
	.body {
		display: flex;
		height: 638px;
	}

	.side {
		position: relative;
		flex: none;
		width: 112px;
		display: flex;
		flex-direction: column;
		border-left: 1px solid #444;
		box-sizing: border-box;
	}

	.side-head {
		height: 23px;
		line-height: 24px;
		text-align: center;
		font-size: 14px;
		border-bottom: 1px solid #a01818;
		color: #cfcfcf;
	}

	.side ul {
		list-style: none;
		margin: 0;
		padding: 8px 0 0 7px;
	}

	.side li {
		display: flex;
		align-items: center;
		gap: 7px;
		height: 30px;
		font-size: 14px;
		color: #c8c8c8;
		white-space: nowrap;
	}

	.side li.ye { color: #c6c63c; }
	.side li.re { color: #e83c3c; }

	.side li path {
		fill: none;
		stroke: #c23030;
		stroke-width: 1.3;
	}

	.scrollers {
		display: flex;
		gap: 1px;
		margin: auto 0 0 6px;
		height: 16px;
	}

	.scrollers button {
		width: 49px;
		padding: 0;
		border: 0;
		background: #808080;
		display: flex;
		align-items: center;
		justify-content: center;
	}

	.tri {
		border: 5px solid transparent;
	}

	.tri.up {
		border-top: 0;
		border-bottom-color: #eee;
	}

	.tri.down {
		border-bottom: 0;
		border-top-color: #e0a830;
	}

	.handle {
		position: absolute;
		left: -1px;
		top: 291px;
		width: 10px;
		height: 54px;
		background: linear-gradient(90deg, #777, #555);
		clip-path: polygon(0 0, 100% 20%, 100% 80%, 0 100%);
	}

	.handle i {
		position: absolute;
		top: 22px;
		left: 1px;
		border: 5px solid transparent;
		border-left: 0;
		border-right-color: #e8b030;
	}

	.work {
		width: 797px;
		flex: none;
		display: flex;
		flex-direction: column;
		border-left: 1px solid #a01818;
		box-sizing: border-box;
		overflow: hidden;
	}

	.upper {
		display: flex;
		height: 486px;
	}

	.vtabs {
		flex: none;
		width: 17px;
		padding-top: 2px;
	}

	.vtab {
		box-sizing: border-box;
		writing-mode: vertical-lr;
		text-orientation: upright;
		height: 61px;
		width: 17px;
		letter-spacing: 0;
		line-height: 15px;
		text-align: center;
		border: 1px solid #a01818;
		border-left: 0;
		color: #c8c8c8;
		font-size: 12px;
		clip-path: polygon(0 0, 100% 4px, 100% 100%, 0 100%);
	}

	.vtab.active {
		border-right: 0;
		color: #36e8e8;
		border-top: 0;
		border-bottom: 0;
	}

	.charts {
		flex: none;
		width: 779px;
		display: flex;
		flex-direction: column;
	}

	.chart {
		display: block;
		flex: none;
	}

	.title {
		display: flex;
		align-items: center;
		box-sizing: border-box;
		width: 749px;
		white-space: nowrap;
		border-right: 1px solid #a01818;
	}

	.t-main {
		height: 19px;
		padding-left: 1px;
	}

	.t-vol {
		position: relative;
		width: 779px;
		height: 20px;
		border-top: 1px solid #a01818;
		border-right: 0;
		padding-left: 0;
	}

	.t-vol::after,
	.t-chip::after {
		content: "";
		position: absolute;
		left: 748px;
		top: 0;
		bottom: 0;
		width: 1px;
		background: #a01818;
	}

	.t-chip {
		position: relative;
		width: 779px;
		height: 22px;
		border-top: 1px solid #a01818;
		border-right: 0;
	}

	.gray { color: #c4c4c4; }
	.olive { color: #6a6a24; }
	.rd { color: #e25540; }
	.yellow { color: #d8d840; }
	.yellow2 { color: #f0f040; }
	.mag { color: #d63ce0; }
	.grn { color: #3ed24a; }

	.m-a { margin-left: 43px; }
	.m-b { margin-left: 3px; }
	.mini { margin-left: 4px; }
	.m-c { margin-left: 10px; }
	.m-d { margin-left: 30px; }
	.m-e { margin-left: 60px; }
	.m-f { margin-left: 15px; }
	.m-g { margin-left: 5px; }
	.m-h { margin-left: 6px; }
	.m-i { margin-left: 75px; }

	.dot {
		stroke: #7a2020;
		stroke-dasharray: 1 4;
	}

	.mark {
		fill: none;
		stroke: #e030e0;
		stroke-width: 1.4;
	}

	.band {
		fill: none;
		stroke: #666410;
		stroke-width: 2.8;
	}

	.fan {
		fill: none;
		stroke-width: 1;
	}

	.trend {
		fill: none;
		stroke: #b0b0b0;
	}

	.cyan { stroke: #a0e8e8; }
	.lime { stroke: #3cb43c; }
	.red { stroke: #a01818; }

	.candles {
		shape-rendering: crispEdges;
	}

	.arrow {
		fill: #f01818;
		stroke: #ffb0a0;
		stroke-width: .6;
	}

	.walker circle { fill: #e8b870; }

	.walker path {
		fill: none;
		stroke: #e8b870;
		stroke-width: 1.6;
	}

	.stack {
		stroke: #b8b8b8;
		stroke-width: 1;
		shape-rendering: crispEdges;
	}

	.legend {
		fill: #555;
		stroke: #c8c8c8;
	}

	.wave {
		fill: none;
		stroke: #d0d8d0;
		stroke-width: .8;
	}

	.wave.w2 { stroke: #a8b8ac; }

	.t { font: 12px "Liberation Sans", "Noto Sans CJK SC", sans-serif; }
	.tgray { fill: #a8a8a8; font-size: 13px; }
	.tgray2 { fill: #707070; }
	.twhite { fill: #eee; font-size: 13px; }
	.twhite12 { fill: #e8e8e8; }
	.tw11 { fill: #ececec; font-size: 12px; }
	.tred14 { fill: #b83232; font-size: 14px; }
	.tred13 { fill: #b83232; font-size: 13px; }
	.tlb { fill: #b8d0f0; font-size: 13px; }
	.tcy { fill: #3ee0e0; font-size: 13px; }
	.tfade { fill: #a03030; font-size: 12px; }

	.dates {
		position: relative;
		height: 16px;
		box-sizing: border-box;
		border-top: 1px solid #a01818;
		line-height: 15px;
		color: #c03838;
	}

	.date {
		position: absolute;
		top: 0;
	}

	.cursor {
		position: absolute;
		left: 142px;
		top: 0;
		width: 77px;
		height: 15px;
		background: #12126e;
		color: #b8c8f0;
		text-align: center;
	}

	.kind {
		position: absolute;
		left: 752px;
		color: #c8c8c8;
	}

	.tabs-a,
	.tabs-b {
		display: flex;
		flex: none;
		border-top: 1px solid #a01818;
		border-bottom: 1px solid #a01818;
		box-sizing: border-box;
		height: 18px;
	}

	.tab {
		flex: none;
		box-sizing: border-box;
		text-align: center;
		line-height: 16px;
		white-space: nowrap;
		border-right: 1px solid #a01818;
		color: #bdbdbd;
		overflow: hidden;
	}

	.tab.on { background: #2a2a2a; }
	.tab.cy { color: #2fd8d8; }
	.tab.ye { color: #c0c034; }
	.tab.tight { letter-spacing: -1px; }

	.tab:last-child { border-right: 0; }

	/* 下方两个面板 */
	.panels {
		display: flex;
		flex: none;
		height: 131px;
	}

	.panel {
		box-sizing: border-box;
		display: flex;
		flex-direction: column;
	}

	.panel.left {
		width: 409px;
		border-right: 1px solid #a01818;
	}

	.panel.right {
		width: 387px;
	}

	.p-head {
		display: flex;
		flex: none;
		box-sizing: border-box;
		height: 21px;
		align-items: center;
		padding-left: 4px;
		border-bottom: 1px solid #a01818;
		white-space: nowrap;
	}

	.name { margin-left: 16px; }
	.stat { margin-left: 24px; }
	.period { margin-left: auto; padding-right: 1px; }

	.p-body {
		flex: 1;
		position: relative;
		padding-top: 16px;
	}

	.left .barrow { padding-left: 84px; }
	.right .barrow { padding-left: 83px; }

	.net {
		text-align: center;
		line-height: 14px;
		margin-bottom: 5px;
	}

	.left .net { margin-left: -2px; }
	.right .net { margin-left: 20px; }
	.netred { color: #c46c6c; }
	.netgrn { color: #48b050; }

	.barrow {
		display: flex;
		height: 25px;
		position: relative;
	}

	.side-val {
		position: absolute;
		display: flex;
		flex-direction: column;
		align-items: center;
		width: 70px;
		line-height: 17px;
		top: -5px;
	}

	.side-val.re-t { left: 13px; }
	.side-val.gr-t { left: 326px; }
	.right .side-val.re-t { left: 11px; }
	.right .side-val.gr-t { left: 325px; }

	.re-t { color: #c46c6c; }
	.gr-t { color: #48b050; }

	.bar {
		position: relative;
		display: flex;
		width: 240px;
		height: 25px;
	}

	.b-red {
		background: linear-gradient(#7a2a2a, #e07878 55%, #8a2a2a);
	}

	.b-grn {
		flex: 1;
		background: linear-gradient(#178a1c, #52e452 50%, #128018);
	}

	.tick {
		position: absolute;
		top: 0;
		bottom: 0;
		width: 1px;
		background: #111;
	}

	.flows {
		position: relative;
		display: flex;
		padding-left: 84px;
		margin-top: 18px;
	}

	.flow {
		flex: none;
		width: 60px;
		display: flex;
		flex-direction: column;
		align-items: center;
		line-height: 14px;
		margin-top: -1px;
	}

	.flow.red { color: #c46c6c; }
	.flow.grn { color: #48b050; }
	.flow.lift { margin-top: -4px; }
	.flow.up10 { margin-top: -10px; }
	.flow.up9 { margin-top: -9px; }
	.flow.up6 { margin-top: -6px; }

	.grad {
		display: block;
		width: 30px;
		height: 7px;
		margin: -3px 0 -5px;
		background: linear-gradient(90deg, #d06868, #602020);
	}

	.grad.short { height: 4px; margin: -1px 0 -1px; }

	.grad.ggreen {
		margin: -2px 0 -5px;
		background: linear-gradient(90deg, #48d848, #0e4a12);
	}

	.grad.gline {
		height: 1px;
		margin: 3px 0 2px;
		background: #a07a30;
	}

	.grad.rline {
		height: 1px;
		margin: 1px 0 1px;
		background: #c47070;
	}

	.flows .axis {
		position: absolute;
		left: 98px;
		top: 9px;
		width: 210px;
		height: 1px;
		background: #b01c1c;
	}

	.statusline {
		height: 3px;
		background: #eee;
		flex: none;
	}
</style>
